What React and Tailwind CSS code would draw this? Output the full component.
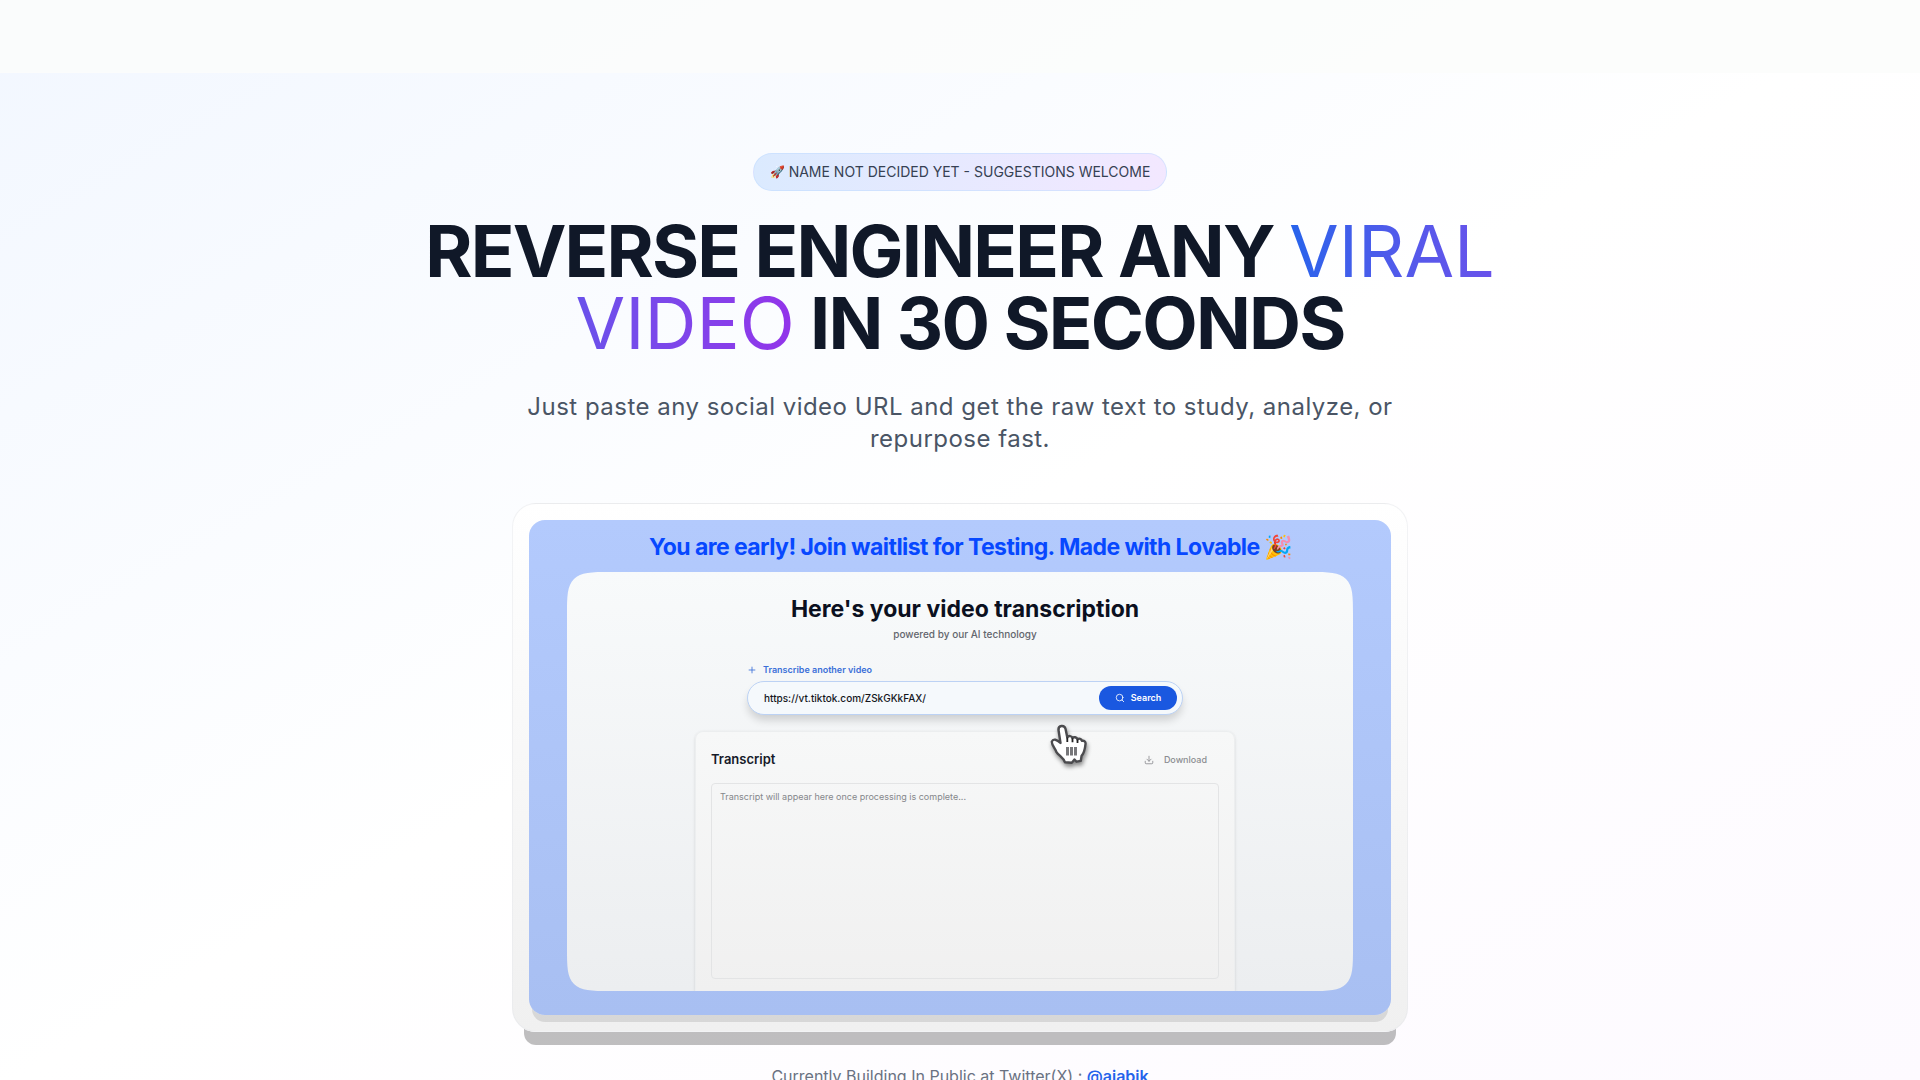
import { Download, Plus, Search } from 'lucide-react';

const HandCursor = () => (
  <svg viewBox="0 0 38 42" className="w-[38px] h-[42px] drop-shadow-[1px_3px_2px_rgba(0,0,0,0.45)]" aria-hidden="true">
    <path
      d="M8.500 6c-.5-4.800 5.800-5.500 7-1.200l1.800 8.700c1.200-2.200 4.600-1.800 5.200.6 1.200-1.600 4.300-1 5 1.200 1.400-1.300 4-.6 4.400 1.600 2.200-.7 4 .7 3.600 3.200-.5 4.600-1.100 8.700-3.900 11.700l-.8 5-4.300.9-2-2.200-2.700 3.200-6.800-.4c-1.400-4.800-6.200-6.600-8.700-10.500C5.300 24.600 1.500 21 1.800 17.600c1.400-3.300 5.200-2.100 8.700 1.400z"
      fill="#fff"
      stroke="#4b4b4e"
      strokeWidth="2.400"
      strokeLinejoin="round"
    />
    <path d="M17.300 13.500v4.500M22.500 14.200v4M27.500 15.400v3.600" stroke="#222" strokeWidth="1.800" fill="none" />
    <path d="M17.500 23v8.500M21.500 23v8.500M25.500 23v8.500" stroke="#77777a" strokeWidth="3" />
  </svg>
);

const TranscriptDemo = () => (
  <div className="overflow-hidden rounded-2xl bg-linear-to-b from-[#b3cafd] to-[#a8bff2] shadow-[0_10px_0_-3px_rgba(0,0,0,0.1)] px-[38px] pb-6">
    <p className="flex h-[52px] items-center justify-center pt-[2px] pl-[22px] text-[23px] font-bold tracking-tight text-[#0748ff]">
      You are early! Join waitlist for Testing. Made with Lovable 🎉
    </p>

    <div className="flex h-[419px] flex-col items-center overflow-hidden rounded-[44px] bg-linear-to-b from-[#f8fafb] to-[#eceef0] pt-5 pl-[10px] [corner-shape:squircle]">
      <h2 className="text-[23px] leading-[34px] font-bold text-[#0b1020]">Here's your video transcription</h2>
      <p className="text-[10px] leading-4 font-medium text-[#63666d]">powered by our AI technology</p>

      <div className="mt-[18px] w-[436px]">
        <button type="button" className="flex items-center gap-[6px] text-[9px] leading-5 font-semibold text-[#3b6fd8]">
          <Plus className="size-[10px]" /> Transcribe another video
        </button>
        <form
          className="mt-px flex h-[34px] items-center rounded-full border border-[#bcd2f4] bg-[#f5f9fc] pr-[5px] pl-4 shadow-[0_6px_8px_-1px_rgba(0,0,0,0.16)]"
          onSubmit={(e) => e.preventDefault()}
        >
          <input
            type="text"
            aria-label="Video URL"
            defaultValue="https://vt.tiktok.com/ZSkGKkFAX/"
            className="min-w-0 flex-1 bg-transparent text-[10px] font-medium text-[#14161c] outline-none"
          />
          <button
            type="submit"
            className="flex h-6 w-[78px] items-center justify-center gap-[6px] rounded-full bg-[#1a58e0] text-[9px] font-semibold text-white"
          >
            <Search className="size-[10px]" /> Search
          </button>
        </form>
      </div>

      <section className="relative mt-4 flex w-[540px] flex-1 flex-col rounded-t-lg border border-b-0 border-[#eceeef] bg-linear-to-b from-[#f7f8f8] to-[#f0f0f0] px-[15px] pb-3 shadow-[0_1px_3px_rgba(0,0,0,0.12)]">
        <div className="flex h-[51px] items-center justify-between pt-[5px]">
          <h3 className="text-[13px] font-semibold text-[#151a28]">Transcript</h3>
          <button type="button" className="flex items-center gap-[10px] px-3 text-[9px] font-medium text-[#8b8d91]">
            <Download className="size-[10px]" /> Download
          </button>
        </div>
        <textarea
          readOnly
          aria-label="Transcript"
          placeholder="Transcript will appear here once processing is complete..."
          className="flex-1 resize-none rounded-sm border border-[#e3e4e5] px-2 py-[5px] text-[9px] leading-4 outline-none placeholder:text-[#85878b]"
        />
        <div className="absolute top-[-8px] left-[354px]">
          <HandCursor />
        </div>
      </section>
    </div>
  </div>
);

const App = () => (
  <div className="h-screen overflow-hidden bg-white font-['Inter',sans-serif]">
    <div className="min-h-screen bg-linear-to-br from-[#f2f7ff] via-white to-[#fdfaff]">
      <header className="h-[73px] border-b border-white/20 bg-[#fbfcfb]/80" />

      <main className="flex flex-col items-center pt-20">
        <span className="flex items-center gap-1 rounded-full border border-blue-200/50 bg-linear-to-r from-blue-100 to-purple-100 px-4 py-2 text-sm text-gray-700 uppercase">
          <span className="text-xs">🚀</span> Name not decided yet - suggestions welcome
        </span>

        <h1 className="mt-6 max-w-6xl text-center text-7xl leading-none font-bold tracking-tight text-gray-900">
          REVERSE ENGINEER ANY{' '}
          <span className="bg-linear-to-r from-[#2563eb] to-[#9333ea] bg-clip-text font-normal tracking-normal text-transparent">
            VIRAL VIDEO
          </span>{' '}
          IN 30 SECONDS
        </h1>

        <p className="mt-8 max-w-4xl text-center text-2xl tracking-[0.02em] text-gray-600">
          Just paste any social video URL and get the raw text to study, analyze, or repurpose fast.
        </p>

        <div className="mt-12 w-full max-w-4xl rounded-3xl border border-gray-200/50 bg-linear-to-b from-white to-[#f0f0f0] p-4 shadow-[0_25px_0_-12px_rgba(0,0,0,0.25)]">
          <TranscriptDemo />
        </div>

        <p className="mt-8 text-base text-gray-500">
          Currently Building In Public at Twitter(X) :{' '}
          <a href="#twitter" className="font-semibold text-[#2563eb]">
            @ajabik
          </a>
        </p>
      </main>
    </div>
  </div>
);

export default App;
